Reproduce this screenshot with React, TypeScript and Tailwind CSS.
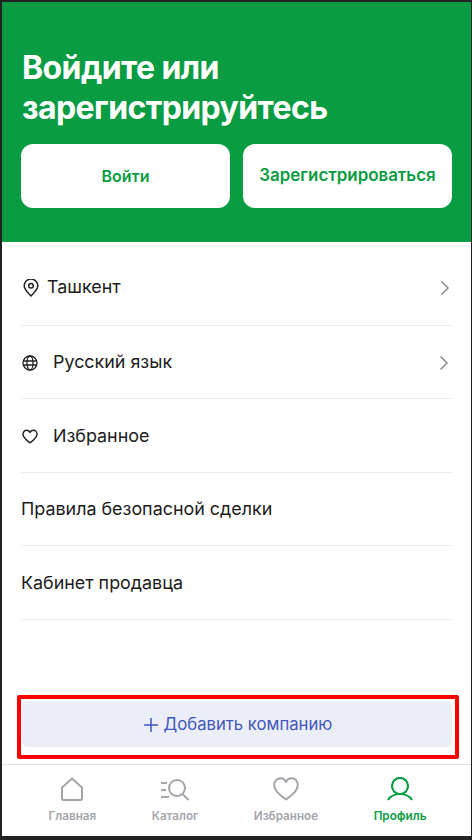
import React from "react";

const font = { fontFamily: '"Inter", "Noto Sans", sans-serif' };

function Chevron() {
  return (
    <svg width="10" height="16" viewBox="0 0 10 16" fill="none" stroke="#8f8f8f" strokeWidth="1.6" className="ml-auto">
      <path d="M1.5 1.5 8 8l-6.5 6.5" />
    </svg>
  );
}

function Row({ icon, label, chevron, gap = "gap-[15px] pl-[1px]", h = "h-[73.5px] pt-[2px]", pr = "pr-[2px]" }: { icon?: React.ReactNode; label: string; chevron?: boolean; gap?: string; h?: string; pr?: string }) {
  return (
    <div className={`flex items-center ${gap} ${h} ${pr} border-b border-[#eeeeee] text-[17.9px] text-[#1c1c1c]`}>
      {icon}
      <span>{label}</span>
      {chevron && <Chevron />}
    </div>
  );
}

const Pin = (
  <svg width="16" height="18" viewBox="0 0 16 18" fill="none" stroke="#222" strokeWidth="1.5">
    <path d="M8 17c-1-1.300-6.800-6-6.800-10.200a6.800 6.800 0 0 1 13.600 0C14.800 11 9 15.700 8 17z" strokeLinejoin="round" />
    <circle cx="8" cy="6.800" r="2.300" />
  </svg>
);
const Globe = (
  <svg width="16" height="16" viewBox="0 0 16 16" fill="none" stroke="#222" strokeWidth="1.300">
    <circle cx="8" cy="8" r="7" />
    <ellipse cx="8" cy="8" rx="3" ry="7" />
    <path d="M1 6h14M1 10h14" />
  </svg>
);
const Heart = (
  <svg width="16" height="15" viewBox="0 0 16 15" fill="none" stroke="#222" strokeWidth="1.500">
    <path d="M8 13.800C3.500 10.500 1 8.300 1 5.200 1 3 2.600 1.300 4.600 1.300 6 1.300 7.300 2 8 3.300 8.700 2 10 1.300 11.400 1.300c2 0 3.600 1.700 3.600 3.900 0 3.100-2.500 5.300-7 8.600z" strokeLinejoin="round" />
  </svg>
);

function NavItem({ icon, label, active }: { icon: React.ReactNode; label: string; active?: boolean }) {
  return (
    <div className="flex flex-col items-center shrink-0">
      <div className="h-[28px] flex items-end justify-center">{icon}</div>
      <span className={`mt-[8px] text-[11.700px] leading-[14px] font-semibold ${active ? "text-[#099e43]" : "text-[#a3a5ab]"}`}>{label}</span>
    </div>
  );
}

export default function App() {
  return (
    <div style={font} className="w-[472px] h-[840px] bg-[#222222] pl-[2px] pt-[2px] pr-[1px] pb-[4px] overflow-hidden">
      <div className="relative flex flex-col h-full bg-white">
        <header className="h-[240px] bg-[#099c42] px-[19px] pt-[46px] shrink-0">
          <h1 className="text-[32px] leading-[40px] font-bold text-white tracking-[-0.6px] pl-[1px]">Войдите или<br />зарегистрируйтесь</h1>
          <div className="flex gap-[13px] mt-[16px] text-[#099c42] font-semibold text-[16px]">
            <button className="w-[209px] h-[64px] bg-white rounded-[12px]">Войти</button>
            <button className="w-[209px] h-[64px] bg-white rounded-[12px] whitespace-nowrap text-[16.900px]">Зарегистрироваться</button>
          </div>
        </header>

        <div className="mx-[19px] w-[431px] flex-1">
          <Row icon={Pin} label="Ташкент" gap="gap-[8px] pl-[2px]" h="h-[83.500px] pt-[9px]" chevron />
          <Row icon={Globe} label="Русский язык" pr="pr-[3px]" chevron />
          <Row icon={Heart} label="Избранное" />
          <Row label="Правила безопасной сделки" gap="" />
          <Row label="Кабинет продавца" gap="" />
        </div>

        <div className="mx-[20px] mb-[17px] h-[46px] w-[430px] bg-[#ebeef7] rounded-[6px] flex items-center justify-center gap-[6px] pl-[2px] pt-[1px] text-[#4257bd] text-[16.700px] shrink-0">
          <svg width="14" height="14" viewBox="0 0 14 14" stroke="#4257bd" strokeWidth="1.500"><path d="M7 0v14M0 7h14" /></svg>
          <span>Добавить компанию</span>
        </div>

        <nav className="h-[72px] border-t border-[#e2e2e2] flex items-start gap-[55.500px] pt-[8px] pl-[46.500px] shrink-0">
          <NavItem label="Главная" icon={
            <svg width="24" height="24" viewBox="0 0 24 24" fill="none" stroke="#a3a5ab" strokeWidth="2" strokeLinejoin="round"><path d="M12 1.500 2 10.500V21.500a1.500 1.500 0 0 0 1.500 1.500h17a1.500 1.500 0 0 0 1.500-1.500V10.500z" /></svg>
          } />
          <NavItem label="Каталог" icon={
            <svg width="30" height="24" viewBox="0 0 30 24" fill="none" stroke="#a3a5ab" strokeWidth="2"><path d="M1 6h6M1 13h5M1 20h8" /><circle cx="17" cy="11" r="8" /><path d="m22.500 17 6 6" /></svg>
          } />
          <NavItem label="Избранное" icon={
            <svg width="26" height="24" viewBox="0 0 26 24" fill="none" stroke="#a3a5ab" strokeWidth="2"><path d="M13 22.500C5 16.500 1.200 13 1.200 7.800 1.200 4 4 1.300 7.300 1.300 9.700 1.300 12 2.700 13 5c1-2.300 3.300-3.700 5.700-3.700 3.300 0 6.100 2.700 6.100 6.500C24.800 13 21 16.500 13 22.500z" strokeLinejoin="round" /></svg>
          } />
          <NavItem label="Профиль" active icon={
            <svg width="26" height="24" viewBox="0 0 26 24" fill="none" stroke="#099e43" strokeWidth="2.200"><circle cx="13" cy="9" r="8" /><path d="M1 23c2.500-4 6.500-6 12-6s9.500 2 12 6" /></svg>
          } />
        </nav>

        <div className="absolute left-[15px] top-[693px] w-[442px] h-[64px] border-[4px] border-[#ff0000] rounded-[2px] pointer-events-none" />
      </div>
    </div>
  );
}
